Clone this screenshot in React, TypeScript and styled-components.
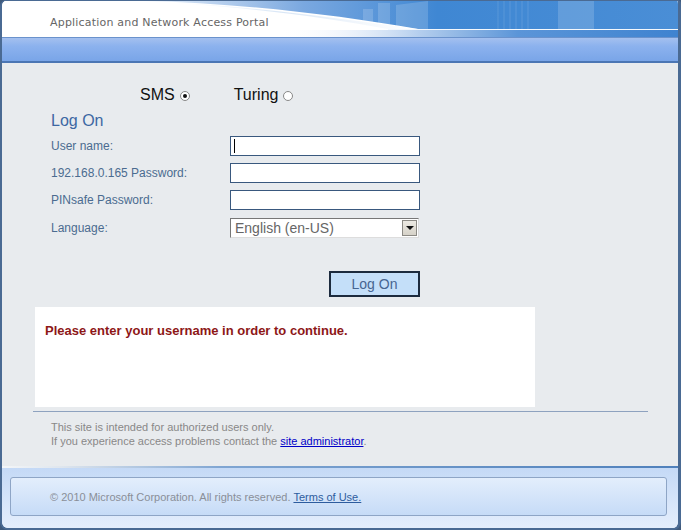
import React from "react";
import styled, { createGlobalStyle } from "styled-components";

const GlobalStyle = createGlobalStyle`
  html, body {
    margin: 0;
    padding: 0;
    background: #3f5a7c;
  }
  * { box-sizing: border-box; }
`;

const Frame = styled.div`
  width: 681px;
  height: 530px;
  display: flex;
  flex-direction: column;
  border-style: solid;
  border-color: #4a6a93;
  border-width: 1px 3px 2px 2px;
  border-radius: 6px 4px 8px 8px;
  overflow: hidden;
  background: #e8ebee;
  font-family: "Liberation Sans", Arial, sans-serif;
`;

const Header = styled.div`
  position: relative;
  height: 36px;
  flex: none;
  background: #fff;
  display: flex;
  align-items: center;
  padding-left: 48px;
  padding-top: 6px;
`;

const HeaderArt = styled.svg`
  position: absolute;
  top: 0;
  right: 0;
  width: 540px;
  height: 36px;
`;

const PortalTitle = styled.span`
  position: relative;
  font-family: "DejaVu Sans", Verdana, sans-serif;
  font-size: 11px;
  letter-spacing: 0.2px;
  color: #666;
`;

const Band = styled.div`
  height: 26px;
  flex: none;
  background: linear-gradient(#a4c0ef 0%, #8cb2ee 35%, #79a5e8 100%);
  border-top: 1px solid #6a92cc;
  border-bottom: 2px solid #4b76b4;
`;

const Content = styled.div`
  flex: 1;
  display: flex;
  flex-direction: column;
  padding: 20px 0 0 0;
`;

const ModeRow = styled.div`
  display: flex;
  align-items: center;
  gap: 44px;
  padding-left: 138px;
  height: 24px;
`;

const Mode = styled.label`
  display: flex;
  align-items: center;
  gap: 5px;
  font-size: 16px;
  color: #111;
`;

const Radio = styled.span<{ $on?: boolean }>`
  width: 10px;
  height: 10px;
  border-radius: 50%;
  border: 1px solid #888;
  background: #fff;
  display: flex;
  align-items: center;
  justify-content: center;
  margin-top: 1px;
  &::after {
    content: "";
    width: 4px;
    height: 4px;
    border-radius: 50%;
    background: ${(p) => (p.$on ? "#111" : "transparent")};
  }
`;

const Heading = styled.div`
  padding-left: 49px;
  margin-top: 3px;
  font-size: 16px;
  color: #3c67a3;
  height: 22px;
  line-height: 22px;
`;

const FormGrid = styled.div`
  display: grid;
  grid-template-columns: 179px 190px;
  grid-template-rows: 20px 20px 20px 21px;
  row-gap: 7px;
  align-items: end;
  padding-left: 49px;
  margin-top: 4px;
`;

const Label = styled.span`
  font-size: 12px;
  color: #4b6b90;
  line-height: 20px;
`;

const TextBox = styled.div<{ $caret?: boolean }>`
  height: 20px;
  width: 190px;
  border: 1px solid #39587e;
  background: #fff;
  display: flex;
  align-items: center;
  padding-left: 3px;
  &::before {
    content: "";
    width: 1px;
    height: 14px;
    background: ${(p) => (p.$caret ? "#000" : "transparent")};
  }
`;

const Select = styled.div`
  height: 20px;
  width: 189px;
  background: #fff;
  border-top: 1px solid #777;
  border-left: 1px solid #777;
  border-right: 1px solid #ddd;
  border-bottom: 1px solid #ddd;
  display: flex;
  align-items: center;
  justify-content: space-between;
  padding-left: 4px;
  font-size: 14px;
  color: #666;
`;

const SelectArrow = styled.span`
  width: 15px;
  height: 16px;
  margin-right: 1px;
  background: linear-gradient(#ece9e2, #d6d2c8);
  border: 1px solid #8c8a84;
  display: flex;
  align-items: center;
  justify-content: center;
  &::after {
    content: "";
    border-left: 4px solid transparent;
    border-right: 4px solid transparent;
    border-top: 4px solid #111;
  }
`;

const ButtonRow = styled.div`
  padding-left: 327px;
  margin-top: 33px;
`;

const LogOnButton = styled.button`
  width: 91px;
  height: 26px;
  background: #c4dff9;
  border: 2px solid #1c2b3e;
  font-family: "Liberation Sans", Arial, sans-serif;
  font-size: 14px;
  color: #466591;
  padding: 0;
  cursor: pointer;
`;

const MessageBox = styled.div`
  width: 500px;
  height: 100px;
  margin: 10px 0 0 33px;
  background: #fff;
  padding: 16px 10px;
  font-size: 13px;
  font-weight: bold;
  color: #8d1717;
`;

const Divider = styled.div`
  width: 615px;
  margin: 4px 0 0 31px;
  border-top: 1px solid #8ea2bf;
`;

const Notice = styled.div`
  padding: 8px 0 0 49px;
  font-size: 11px;
  line-height: 14px;
  color: #888;
`;

const AdminLink = styled.a`
  color: #0000c8;
  text-decoration: underline;
`;

const FooterArea = styled.div`
  height: 62px;
  flex: none;
  padding: 9px 11px 10px 8px;
  background: linear-gradient(#c4d9f6, #d8e6fa 60%, #e4eefc);
  border-top: 2px solid;
  border-image: linear-gradient(90deg, #f4f6f8 0px, #dfe6ee 60px, #7fa5d2 220px, #4f80bb 100%) 1;
`;

const FooterBox = styled.div`
  height: 39px;
  border: 1px solid #8ea5c6;
  border-radius: 3px;
  background: linear-gradient(#e3eefc, #c6dbf7);
  display: flex;
  align-items: center;
  padding-left: 39px;
  font-size: 11px;
  color: #8a8f98;
`;

const TermsLink = styled.a`
  color: #2d5c9e;
  text-decoration: underline;
  margin-left: 3px;
`;

export default function App() {
  return (
    <>
      <GlobalStyle />
      <Frame>
        <Header>
          <HeaderArt viewBox="0 0 540 36" preserveAspectRatio="none">
            <defs>
              <linearGradient id="sky" x1="0" y1="0" x2="1" y2="0">
                <stop offset="0" stopColor="#eef3fa" />
                <stop offset="0.3" stopColor="#7aa8e0" />
                <stop offset="0.55" stopColor="#3f87d3" />
                <stop offset="1" stopColor="#4a8ed6" />
              </linearGradient>
              <linearGradient id="low" x1="0" y1="0" x2="1" y2="0">
                <stop offset="0" stopColor="#ffffff" stopOpacity="0" />
                <stop offset="0.35" stopColor="#b6cfee" />
                <stop offset="0.6" stopColor="#5b95d8" />
                <stop offset="1" stopColor="#3f83d0" />
              </linearGradient>
              <linearGradient id="swoosh" x1="0" y1="0" x2="1" y2="0">
                <stop offset="0" stopColor="#ffffff" stopOpacity="0" />
                <stop offset="0.5" stopColor="#d8e6f6" />
                <stop offset="1" stopColor="#ffffff" stopOpacity="0.7" />
              </linearGradient>
            </defs>
            <path d="M5 0 C100 2 200 14 280 28 L540 28 L540 0 Z" fill="url(#sky)" />
            <rect x="140" y="29" width="400" height="7" fill="url(#low)" />
            <path d="M5 0 C110 4 200 18 280 28 L250 28 C180 15 100 5 5 0 Z" fill="url(#swoosh)" />
            <g fill="#ffffff" opacity="0.16">
              <rect x="225" y="8" width="10" height="20" />
              <rect x="240" y="2" width="12" height="26" />
              <path d="M258 4 L290 0 L290 28 L258 28 Z" />
              <rect x="420" y="0" width="36" height="28" />
            </g>
            <g stroke="#ffffff" opacity="0.12">
              <line x1="360" y1="0" x2="360" y2="28" />
              <line x1="366" y1="0" x2="366" y2="28" />
              <line x1="372" y1="0" x2="372" y2="28" />
              <line x1="378" y1="0" x2="378" y2="28" />
              <line x1="384" y1="0" x2="384" y2="28" />
              <line x1="390" y1="0" x2="390" y2="28" />
            </g>
            <line x1="250" y1="28.5" x2="540" y2="28.5" stroke="#f4f8fd" strokeWidth="1" />
          </HeaderArt>
          <PortalTitle>Application and Network Access Portal</PortalTitle>
        </Header>
        <Band />
        <Content>
          <ModeRow>
            <Mode>
              SMS <Radio $on />
            </Mode>
            <Mode>
              Turing <Radio />
            </Mode>
          </ModeRow>
          <Heading>Log On</Heading>
          <FormGrid>
            <Label>User name:</Label>
            <TextBox $caret />
            <Label>192.168.0.165 Password:</Label>
            <TextBox />
            <Label>PINsafe Password:</Label>
            <TextBox />
            <Label>Language:</Label>
            <Select>
              English (en-US)
              <SelectArrow />
            </Select>
          </FormGrid>
          <ButtonRow>
            <LogOnButton>Log On</LogOnButton>
          </ButtonRow>
          <MessageBox>Please enter your username in order to continue.</MessageBox>
          <Divider />
          <Notice>
            This site is intended for authorized users only.
            <br />
            If you experience access problems contact the{" "}
            <AdminLink href="#">site administrator</AdminLink>.
          </Notice>
        </Content>
        <FooterArea>
          <FooterBox>
            © 2010 Microsoft Corporation. All rights reserved.
            <TermsLink href="#">Terms of Use.</TermsLink>
          </FooterBox>
        </FooterArea>
      </Frame>
    </>
  );
}
